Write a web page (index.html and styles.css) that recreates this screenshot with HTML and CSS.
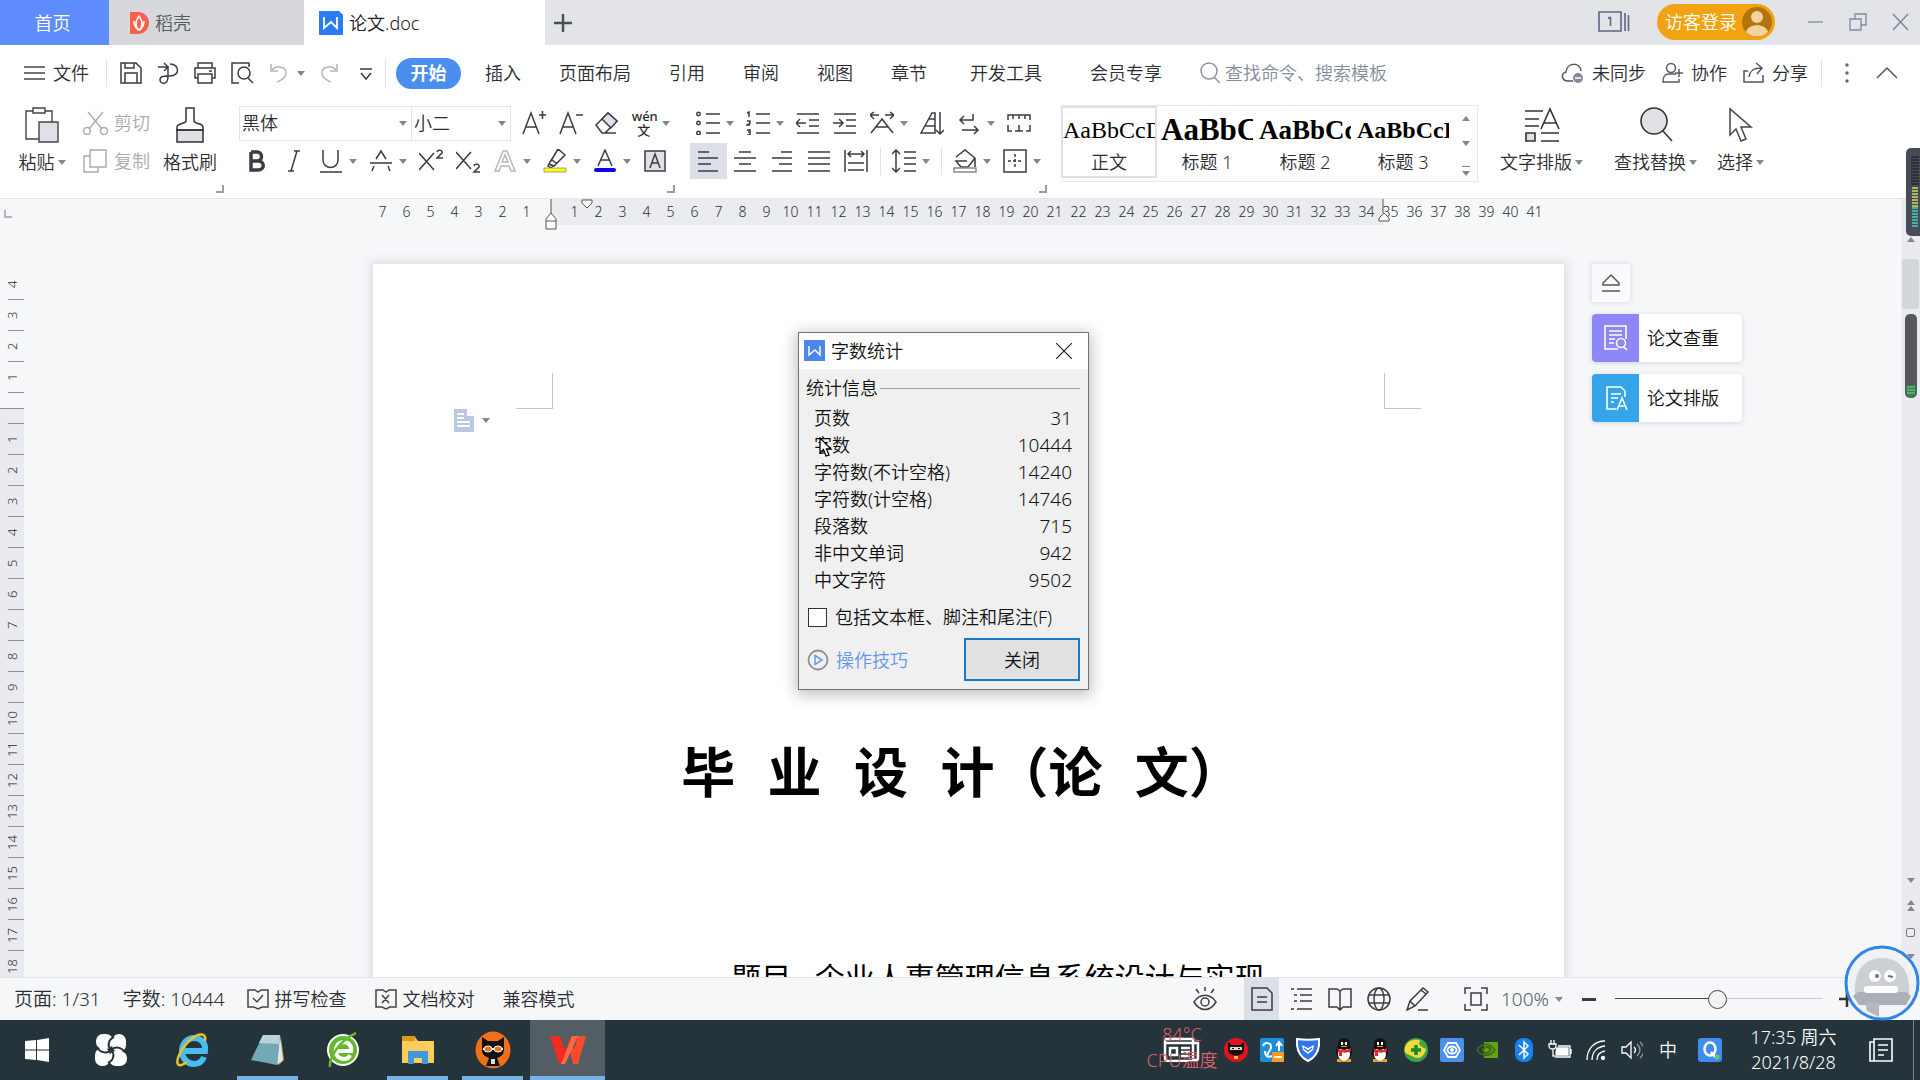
FILE: index.html
```html
<!DOCTYPE html>
<html lang="zh-CN">
<head>
<meta charset="utf-8">
<title>论文.doc</title>
<link rel="stylesheet" href="styles.css">
</head>
<body>
<header class="titlebar">
  <button class="home-tab">首页</button>
  <button class="file-tab">
    <svg width="20" height="22" viewBox="0 0 20 22"><path d="M1 0h8a10.500 10.500 0 0 1 0 22H1z" fill="#f9604c"/><path d="M10 18C6 15 6 9 10 4c4 5 4 11 0 14zM5 9c0 5 2 7 4 9M15 9c0 5-2 7-4 9" fill="none" stroke="#fff" stroke-width="1.500"/></svg>
    稻壳
  </button>
  <button class="file-tab active">
    <svg width="24" height="24" viewBox="0 0 24 24"><path fill="#2b7cf0" d="M0 0h20l4 4v20H0z"/><path d="M5 6v11l7-6 6 6V6" fill="none" stroke="#fff" stroke-width="1.800"/></svg>
    论文.doc
  </button>
  <button class="new-tab" aria-label="新建"><svg width="18" height="18" viewBox="0 0 18 18"><path d="M9 0v18M0 9h18" stroke="#4a505c" stroke-width="2.500"/></svg></button>
  <div class="title-right">
    <svg width="32" height="24" viewBox="0 0 32 24" fill="none" stroke="#5b6784" stroke-width="1.600"><path d="M1 2h22v19H1zM27 3v18M30.500 5v16M12.500 7v9M10 8.500l2.500-1.500"/></svg>
    <i class="sep"></i>
    <button class="login">访客登录
      <svg width="30" height="30" viewBox="0 0 30 30"><circle cx="15" cy="15" r="15" fill="#b37410"/><circle cx="15" cy="10" r="6" fill="#f0d49a"/><path d="M4 25c2-9 20-9 22 0-6 6-16 6-22 0z" fill="#f0d49a"/></svg>
    </button>
    <i class="sep"></i>
    <svg class="win" width="16" height="18" viewBox="0 0 16 18"><path d="M0 9h15" stroke="#8f99b0" stroke-width="1.500"/></svg>
    <svg class="win" width="18" height="18" viewBox="0 0 18 18" fill="none" stroke="#8188a0" stroke-width="1.300"><path d="M1 6h11v11H1zM6 6V1h11v11h-5"/></svg>
    <svg class="win" width="17" height="18" viewBox="0 0 17 18"><path d="M1 1l15 16M16 1L1 17" stroke="#7b8296" stroke-width="1.300"/></svg>
  </div>
</header>

<nav class="menubar">
  <button class="file-menu"><svg width="21" height="16" viewBox="0 0 21 16"><path d="M0 2h21M0 8h21M0 14h21" stroke="#444" stroke-width="1.400"/></svg>文件</button>
  <i class="sep"></i>
  <button class="tool" aria-label="保存"><svg class="ic" viewBox="0 0 24 24"><path d="M2 2h15l5 5v15H2zM6 2v5h9V2M6 22V12h12v10"/></svg></button>
  <button class="tool" aria-label="输出"><svg class="ic" viewBox="0 0 24 24"><path d="M2 6h9M8 2l4 4-4 4M14 3c10 0 10 12 0 12H9M12 15V5M12 15c0 10-8 8-8 4s4-4 8-4"/></svg></button>
  <button class="tool" aria-label="打印"><svg class="ic" viewBox="0 0 24 24"><path d="M5 7V2h14v5M5 17H2V7h20v10h-3M5 13h14v9H5zM16 10h3"/></svg></button>
  <button class="tool" aria-label="打印预览"><svg class="ic" viewBox="0 0 24 24"><path d="M9 22H2V2h17v4M18 17l5 5"/><circle cx="14" cy="12" r="6"/></svg></button>
  <button class="tool wide pale" aria-label="撤销"><svg class="ic" viewBox="0 0 24 24"><path d="M4 3v7h7M4 10c4-6 16-5 15 3-1 5-5 6-9 8"/></svg><i class="caret"></i></button>
  <button class="tool pale" aria-label="恢复"><svg class="ic" viewBox="0 0 24 24"><path d="M20 3v7h-7M20 10c-4-6-16-5-15 3 1 5 5 6 9 8"/></svg></button>
  <button class="tool" aria-label="更多"><svg class="ic" viewBox="0 0 24 24"><path d="M6 8h12M7 12l5 6 5-6"/></svg></button>
  <i class="sep"></i>
  <div class="tabs">
    <button class="pill">开始</button>
    <button>插入</button><button>页面布局</button><button>引用</button><button>审阅</button><button>视图</button><button>章节</button><button class="spaced">开发工具</button><button class="spaced">会员专享</button>
  </div>
  <label class="search"><svg width="22" height="24" viewBox="0 0 22 24" fill="none" stroke="#8d93a5" stroke-width="1.500"><circle cx="9" cy="10" r="8"/><path d="M14 16l6 6"/></svg><input type="text" aria-label="搜索" placeholder="查找命令、搜索模板"></label>
  <div class="menu-right">
    <button><svg width="24" height="24" viewBox="0 0 24 24" fill="none" stroke="#555" stroke-width="1.500"><path d="M12 20H7C0 20 0 12 5 11 6 1 19 1 20 10"/><circle cx="17" cy="17" r="5" fill="#8188a0" stroke="none"/><path d="M14 17h6" stroke="#fff"/></svg>未同步</button>
    <button><svg width="22" height="24" viewBox="0 0 22 24" fill="none" stroke="#555a6c" stroke-width="1.500"><circle cx="9" cy="7" r="4.500"/><path d="M14 13H7c-5 0-6 3-6 8h16v-3M17 8v8M13 12h8"/></svg>协作</button>
    <button><svg width="22" height="24" viewBox="0 0 22 24" fill="none" stroke="#555" stroke-width="1.500"><path d="M5 10H1v11h19v-7M6 16c1-7 5-9 12-9M13 2l6 5-5 6"/></svg>分享</button>
    <i class="sep"></i>
    <svg class="dots" width="6" height="20" viewBox="0 0 6 20" fill="#666"><circle cx="3" cy="2" r="1.700"/><circle cx="3" cy="10" r="1.700"/><circle cx="3" cy="18" r="1.700"/></svg>
    <svg width="22" height="14" viewBox="0 0 22 14"><path d="M1 12L11 2l10 10" fill="none" stroke="#555" stroke-width="1.500"/></svg>
  </div>
</nav>

<section class="ribbon">
  <div class="group clip">
    <button class="big"><svg width="34" height="36" viewBox="0 0 34 36" fill="#fff" stroke="#444" stroke-width="1.400"><path d="M8 4H1v28h14M20 4h7v11M8 1h12v5H8z"/><path d="M14 15h19v20H14z" fill="#dfe1e6"/></svg><span>粘贴<i class="caret"></i></span></button>
    <div class="rows">
      <button class="line pale"><svg width="25" height="24" viewBox="0 0 25 24" fill="none" stroke="#aaa" stroke-width="1.400"><path d="M5 1l14 17M20 1L6 18"/><circle cx="4" cy="20" r="3.500"/><circle cx="21" cy="20" r="3.500"/></svg>剪切</button>
      <button class="line pale"><svg width="25" height="24" viewBox="0 0 25 24" fill="none" stroke="#aaa" stroke-width="1.400"><path d="M7 7H1v16h14v-5M7 1h16v17H7z"/></svg>复制</button>
    </div>
    <button class="big brush"><svg width="28" height="36" viewBox="0 0 28 36" fill="none" stroke="#333" stroke-width="1.500"><path d="M1 23h26v12H1z" fill="#dfe1e6"/><path d="M10 1h8v13c0 3 9 2 9 6v3H1v-3c0-4 9-3 9-6z"/></svg><span>格式刷</span></button>
    <i class="launch"></i>
  </div>

  <div class="group font">
    <div class="row">
      <div class="combos">
        <label class="combo face"><select aria-label="字体"><option>黑体</option></select><i class="caret"></i></label>
        <label class="combo size"><select aria-label="字号"><option>小二</option></select><i class="caret"></i></label>
      </div>
      <button class="tool" aria-label="增大字号"><svg class="ic" viewBox="0 0 24 24"><path d="M1 23L9 2l8 21M4 16h10M17 4h7M20.500 0v8"/></svg></button>
      <button class="tool" aria-label="减小字号"><svg class="ic" viewBox="0 0 24 24"><path d="M1 23L9 2l8 21M4 16h10M17 4h7"/></svg></button>
      <button class="tool" aria-label="清除格式"><svg class="ic" viewBox="0 0 24 24"><path d="M1 14L13 2l9 8-12 12H7zM10 22h11"/><path d="M7 8l9 9 6-7-9-8z" fill="#dfe1e6"/></svg></button>
      <button class="tool wide" aria-label="拼音指南"><span class="wen"><span>wén</span><span>文</span></span><i class="caret"></i></button>
    </div>
    <div class="row">
      <button class="tool" aria-label="加粗"><svg class="ic heavy" viewBox="0 0 24 24"><path d="M6 3v18h7c7 0 7-9 0-9H6M6 3h6c6 0 6 9 0 9"/></svg></button>
      <button class="tool" aria-label="倾斜"><svg class="ic" viewBox="0 0 24 24"><path d="M12 2h6M6 22h6M15 2L9 22"/></svg></button>
      <button class="tool wide" aria-label="下划线"><svg class="ic" viewBox="0 0 24 24"><path d="M4 1v10c0 10 15 10 15 0V1M1 23h22"/></svg><i class="caret"></i></button>
      <button class="tool wide" aria-label="删除线"><svg class="ic" viewBox="0 0 24 24"><path d="M1 14h22M7 10l5-8 5 8M5 17l-2 5M19 17l2 5"/></svg><i class="caret"></i></button>
      <button class="tool" aria-label="上标"><svg class="ic" viewBox="0 0 24 24"><path d="M0 4l15 17M15 4L0 21M18 3c1-3 6-2 5 1l-5 5h6"/></svg></button>
      <button class="tool" aria-label="下标"><svg class="ic" viewBox="0 0 24 24"><path d="M0 3l15 17M15 3L0 20M18 17c1-3 6-2 5 1l-5 5h6"/></svg></button>
      <button class="tool wide pale" aria-label="文字效果"><svg class="ic" viewBox="0 0 24 24"><path d="M2 22L10 2h4l8 20h-4l-2-5H8l-2 5zM9 13h6l-3-7z"/></svg><i class="caret"></i></button>
      <button class="tool wide" aria-label="突出显示"><svg class="ic" viewBox="0 0 24 24"><path d="M6 15L15 0l7 6-11 11zM8 10l6 5M5 17l1-2 4 2-2 2z"/><path d="M1 19h22v4H1z" fill="#ff0" stroke="#888" stroke-width=".8"/></svg><i class="caret"></i></button>
      <button class="tool wide" aria-label="字体颜色"><svg class="ic" viewBox="0 0 24 24"><path d="M5 17l7-16 7 16M8 11h8"/><path d="M3 21h18" stroke="#1000f0" stroke-width="4" stroke-linecap="round"/></svg><i class="caret"></i></button>
      <button class="tool" aria-label="字符底纹"><svg class="ic" viewBox="0 0 24 24"><path d="M2 2h20v20H2z" fill="#dfe1e6"/><path d="M7 19l5-14 5 14M9 14h6"/></svg></button>
    </div>
    <i class="launch"></i>
  </div>

  <div class="group para">
    <div class="row">
      <button class="tool wide" aria-label="项目符号"><svg class="ic" viewBox="0 0 24 24"><path d="M10 3h14M10 12h14M10 22h14"/><circle cx="2.500" cy="3" r="1.700"/><circle cx="2.500" cy="12" r="1.700"/><circle cx="2.500" cy="22" r="1.700"/></svg><i class="caret"></i></button>
      <button class="tool wide" aria-label="编号"><svg class="ic" viewBox="0 0 24 24"><path d="M10 3h14M10 12h14M10 22h14M1 2l2-1v5M1 10h3v2l-3 2h3M1 19h3v5H1M2 21h2"/></svg><i class="caret"></i></button>
      <button class="tool" aria-label="减少缩进"><svg class="ic" viewBox="0 0 24 24"><path d="M1 3h22M13 9h10M13 15h10M1 22h22M0 12h10M4 8l-4 4 4 4"/></svg></button>
      <button class="tool" aria-label="增加缩进"><svg class="ic" viewBox="0 0 24 24"><path d="M1 3h22M13 9h10M13 15h10M1 22h22M0 12h10M6 8l4 4-4 4"/></svg></button>
      <button class="tool wide" aria-label="中文版式"><svg class="ic" viewBox="0 0 24 24"><path d="M1 22l11-14 11 14M6 16h12M0 4h9M4 1L0 4l4 4M24 4h-9M20 1l4 3-4 4"/></svg><i class="caret"></i></button>
      <button class="tool" aria-label="排序"><svg class="ic" viewBox="0 0 24 24"><path d="M1 22L12 2h3v20zM9 8h6M5 15h10M20 1v22M16 19l4 4 4-4"/></svg></button>
      <button class="tool wide" aria-label="换行"><svg class="ic" viewBox="0 0 24 24"><path d="M16 3v6H3M7 5L3 9l4 4M5 19h16M17 15l4 4-4 4"/></svg><i class="caret"></i></button>
      <button class="tool" aria-label="标尺"><svg class="ic" viewBox="0 0 24 24"><path d="M1 9V4h22v5M6 4v4M12 4v4M18 4v4M1 14v6h4M23 14v6h-4M8 20h8M12 14v6"/></svg></button>
    </div>
    <div class="row">
      <button class="tool on" aria-label="左对齐"><svg class="ic" viewBox="0 0 24 24"><path d="M2 3h11M2 9h20M2 15h13M2 22h20"/></svg></button>
      <button class="tool" aria-label="居中"><svg class="ic" viewBox="0 0 24 24"><path d="M6 3h12M1 9h22M6 15h12M1 22h22"/></svg></button>
      <button class="tool" aria-label="右对齐"><svg class="ic" viewBox="0 0 24 24"><path d="M11 3h11M2 9h20M9 15h13M2 22h20"/></svg></button>
      <button class="tool" aria-label="两端对齐"><svg class="ic" viewBox="0 0 24 24"><path d="M1 3h22M1 9h22M1 15h22M1 22h22"/></svg></button>
      <button class="tool" aria-label="分散对齐"><svg class="ic" viewBox="0 0 24 24"><path d="M1 1v22M23 1v22M4 5h16M7 2L4 5l3 3M17 2l3 3-3 3M4 14h16M4 21h16"/></svg></button>
      <i class="sep"></i>
      <button class="tool wide" aria-label="行距"><svg class="ic" viewBox="0 0 24 24"><path d="M4 1v22M0 5l4-4 4 4M0 19l4 4 4-4M12 3h12M12 9h12M12 15h12M12 22h12"/></svg><i class="caret"></i></button>
      <i class="sep"></i>
      <button class="tool wide" aria-label="底纹"><svg class="ic" viewBox="0 0 24 24"><path d="M3 8L12 1l10 8-7 9H8L3 12h11M22 9v9"/><path d="M1 19h22v4H1z" stroke="#888"/></svg><i class="caret"></i></button>
      <button class="tool wide" aria-label="边框"><svg class="ic" viewBox="0 0 24 24"><path d="M1 1h22v22H1z"/><path d="M12 5v14M5 12h14" stroke-dasharray="3 2"/></svg><i class="caret"></i></button>
    </div>
    <i class="launch"></i>
  </div>

  <div class="gallery">
    <button class="style on"><span class="sample">AaBbCcD</span>正文</button>
    <button class="style h1"><span class="sample">AaBbC</span>标题 1</button>
    <button class="style h2"><span class="sample">AaBbCc</span>标题 2</button>
    <button class="style h3"><span class="sample">AaBbCcD</span>标题 3</button>
    <div class="spin"><i class="caret up"></i><i class="caret"></i><svg width="10" height="10" viewBox="0 0 10 10" fill="#85878d"><path d="M1 0h8v1H1zM1 5h8l-4 5z"/></svg></div>
  </div>

  <div class="finals">
    <button class="big"><svg width="36" height="36" viewBox="0 0 36 36" fill="none" stroke="#333" stroke-width="1.600"><path d="M1 4h18M1 12h14M1 19h14M17 22L26 2l9 20M20 16h12M17 26h18M17 34h18"/><path d="M2 26h9v8H2z" fill="#dfe1e6"/></svg><span>文字排版<i class="caret"></i></span></button>
    <button class="big find"><svg width="34" height="36" viewBox="0 0 34 36" fill="none" stroke="#333" stroke-width="1.600"><circle cx="15" cy="14" r="13" fill="#dfe1e6"/><path d="M24 24l9 10"/></svg><span>查找替换<i class="caret"></i></span></button>
    <button class="big"><svg width="24" height="36" viewBox="0 0 24 36" fill="none" stroke="#444" stroke-width="1.500"><path d="M1 2v26l6-6 5 12 5-2-5-12h10z"/></svg><span>选择<i class="caret"></i></span></button>
  </div>
</section>

<main class="workspace">
  <div class="vruler">
    <div class="vnums"><span>4</span><span>3</span><span>2</span><span>1</span><span class="zero"></span><span>1</span><span>2</span><span>3</span><span>4</span><span>5</span><span>6</span><span>7</span><span>8</span><span>9</span><span>10</span><span>11</span><span>12</span><span>13</span><span>14</span><span>15</span><span>16</span><span>17</span><span>18</span></div>
  </div>
  <div class="canvas">
    <div class="hruler">
      <span>7</span><span>6</span><span>5</span><span>4</span><span>3</span><span>2</span><span>1</span><span></span><span>1</span><span>2</span><span>3</span><span>4</span><span>5</span><span>6</span><span>7</span><span>8</span><span>9</span><span>10</span><span>11</span><span>12</span><span>13</span><span>14</span><span>15</span><span>16</span><span>17</span><span>18</span><span>19</span><span>20</span><span>21</span><span>22</span><span>23</span><span>24</span><span>25</span><span>26</span><span>27</span><span>28</span><span>29</span><span>30</span><span>31</span><span>32</span><span>33</span><span>34</span><span>35</span><span>36</span><span>37</span><span>38</span><span>39</span><span>40</span><span>41</span>
      <svg class="mark first" width="12" height="10" viewBox="0 0 12 10"><path d="M1 1h10v3L6 9 1 4z"/></svg>
      <svg class="mark left" width="12" height="32" viewBox="0 0 12 32"><path d="M6 0v14M1 30V20l5-6 5 6v10zM1 22h10"/></svg>
      <svg class="mark right" width="12" height="24" viewBox="0 0 12 24"><path d="M5 0v14M1 22v-3l5-5 5 5v3z"/></svg>
    </div>
    <article class="page">
      <div class="crops"><i class="crop tl"></i><i class="crop tr"></i></div>
      <div class="smart"><svg width="20" height="23" viewBox="0 0 20 23"><path d="M0 0h13l7 7v16H0z" fill="#b9c7e4"/><path d="M3 5h7M3 9h7M3 13h13M3 17h13" stroke="#fff" stroke-width="2"/><path d="M13 0v7h7" fill="#fff"/></svg><i class="caret"></i></div>
      <h1>毕 业 设 计（论 文）</h1>
      <p>题目&nbsp;&nbsp; 企业人事管理信息系统设计与实现</p>
    </article>
  </div>
  <div class="scrollbar">
    <i class="caret up"></i><i class="thumb"></i>
    <div class="scroll-end"><i class="caret"></i><span><i class="caret up"></i><i class="caret up"></i></span><i class="box"></i><i class="caret"></i></div>
  </div>

  <i class="tabstop"></i>
  <aside class="side">
    <button class="eject" aria-label="收起"><svg width="20" height="20" viewBox="0 0 20 20" fill="none" stroke="#555" stroke-width="1.500"><path d="M10 2l8 8v2H2v-2zM1 18h18"/></svg></button>
    <button class="card"><span class="tile violet"><svg width="26" height="26" viewBox="0 0 26 26" fill="none" stroke="#fff" stroke-width="1.600"><path d="M15 24H2V1h21v13M6 6h13M6 10h13M6 14h6M6 18h5"/><circle cx="18" cy="18" r="4.500"/><path d="M21 22l3 3"/></svg></span>论文查重</button>
    <button class="card"><span class="tile sky"><svg width="26" height="26" viewBox="0 0 26 26" fill="none" stroke="#fff" stroke-width="1.600"><path d="M13 24H4V2h14l4 4v6M8 9h10M8 13h7M8 17h3M14 25l5-12 5 12M16 21h6"/></svg></span>论文排版</button>
  </aside>

  <section class="dialog" role="dialog" aria-label="字数统计">
    <header><svg width="21" height="21" viewBox="0 0 21 21"><path d="M0 0h21v21H0z" fill="#4a86ee"/><path d="M5 6v9l6-5 5 5V6" fill="none" stroke="#fff" stroke-width="1.500"/></svg>字数统计<button aria-label="关闭窗口"><svg width="16" height="16" viewBox="0 0 16 16"><path d="M0 0l16 16M16 0L0 16" stroke="#222" stroke-width="1.200"/></svg></button></header>
    <div class="legend">统计信息</div>
    <table>
      <tr><th>页数</th><td>31</td></tr>
      <tr><th>字数</th><td>10444</td></tr>
      <tr><th>字符数(不计空格)</th><td>14240</td></tr>
      <tr><th>字符数(计空格)</th><td>14746</td></tr>
      <tr><th>段落数</th><td>715</td></tr>
      <tr><th>非中文单词</th><td>942</td></tr>
      <tr><th>中文字符</th><td>9502</td></tr>
    </table>
    <label class="check"><input type="checkbox">包括文本框、脚注和尾注(F)</label>
    <footer>
      <a href="#"><svg width="22" height="22" viewBox="0 0 22 22" fill="none"><circle cx="11" cy="11" r="9.500" stroke="#8d9098" stroke-width="1.800"/><path d="M8 6.500l7 4.500-7 4.500z" stroke="#6a9be8" stroke-width="1.500"/></svg>操作技巧</a>
      <button>关闭</button>
    </footer>
    <svg class="pointer" width="14" height="20" viewBox="0 0 14 20"><path d="M1 1v15l3.500-3.500L7 19l3-1-2.500-6H12z" fill="#fff" stroke="#000" stroke-width="1.300"/></svg>
  </section>
</main>

<div class="statusbar">
  <span class="count">页面: 1/31</span><span class="count">字数: 10444</span>
  <button><svg width="22" height="22" viewBox="0 0 22 22" fill="none" stroke="#444" stroke-width="1.500"><path d="M8 2H1v17h6l4 2 4-2h6V2h-7l-3 2zM6 10l4 4 6-7"/></svg>拼写检查</button>
  <button><svg width="22" height="22" viewBox="0 0 22 22" fill="none" stroke="#444" stroke-width="1.500"><path d="M8 2H1v17h6l4 2 4-2h6V2h-7l-3 2zM7 7l7 8M14 7l-7 8"/></svg>文档校对</button>
  <span class="compat">兼容模式</span>
  <div class="status-right">
    <button class="view eye" aria-label="护眼模式"><svg class="ic" viewBox="0 0 24 24"><path d="M1 15c6-9 16-9 22 0-6 10-16 10-22 0zM12 0v4M3 2l3 4M21 2l-3 4"/><circle cx="12" cy="15" r="4"/></svg></button>
    <button class="view on" aria-label="页面视图"><svg class="ic" viewBox="0 0 24 24"><path d="M2 1h15l5 5v17H2zM7 10h10M7 15h10"/></svg></button>
    <button class="view" aria-label="大纲"><svg class="ic" viewBox="0 0 24 24"><path d="M2 2h3M8 2h15M5 8h3M11 8h12M5 14h3M11 14h12M2 22h3M8 22h15"/></svg></button>
    <button class="view" aria-label="阅读版式"><svg class="ic" viewBox="0 0 24 24"><path d="M1 2h8l3 2 3-2h8v18h-8l-3 3-3-3H1zM12 4v18"/></svg></button>
    <button class="view" aria-label="Web 版式"><svg class="ic" viewBox="0 0 24 24"><circle cx="12" cy="12" r="11"/><ellipse cx="12" cy="12" rx="5" ry="11"/><path d="M2 8h20M2 16h20"/></svg></button>
    <button class="view" aria-label="写作模式"><svg class="ic" viewBox="0 0 24 24"><path d="M1 23l3-9L17 1l5 4-13 14zM4 14l5 5M12 23h10M15 3l5 4"/></svg></button>
    <button class="view fit" aria-label="适合页面"><svg class="ic" viewBox="0 0 24 24"><path d="M1 7V1h6M17 1h6v6M23 17v6h-6M7 23H1v-6M7 6h10v12H7z"/></svg></button>
    <button class="zoom">100%<i class="caret"></i></button>
    <button class="minus" aria-label="缩小"></button>
    <input type="range" aria-label="缩放" min="0" max="100" value="49">
    <button class="plus" aria-label="放大"><svg width="16" height="16" viewBox="0 0 16 16"><path d="M8 0v16M0 8h16" stroke="#333" stroke-width="2.500"/></svg></button>
  </div>
</div>

<footer class="taskbar">
  <button class="app start" aria-label="开始菜单"><svg width="24" height="24" viewBox="0 0 24 24" fill="#fff"><path d="M0 3l11-1v9.500H0zM12 2l12-2v11.500H12zM0 12.500h11V22L0 21zM12 12.500h12V24l-12-2z"/></svg></button>
  <button class="app" aria-label="助手"><svg width="34" height="34" viewBox="0 0 34 34" fill="#fff"><rect x="2" y="1" width="17" height="15" rx="7"/><rect x="18" y="1" width="14" height="18" rx="7"/><rect x="15" y="18" width="18" height="15" rx="7"/><rect x="1" y="15" width="15" height="18" rx="7"/><path d="M17 17c-4-4-3-10 3-13M17 17c4-4 10-3 14 2M17 17c4 4 3 10-3 13M17 17c-4 4-10 3-14-2" stroke="#26343a" stroke-width="2" fill="none"/></svg></button>
  <button class="app after" aria-label="浏览器"><svg width="36" height="36" viewBox="0 0 36 36" fill="none"><path d="M8 19h22c1-8-4-13-11-13C12 6 7 12 7 19s5 13 12 13c5 0 8-2 10-7" stroke="#48bdf0" stroke-width="6"/><path d="M30 9C32 1 24 0 15 8 6 16-1 31 4 33c2 1 5-1 8-3" stroke="#f0be2a" stroke-width="2.500"/></svg></button>
  <button class="app run" aria-label="记事本"><svg width="36" height="34" viewBox="0 0 36 34"><path d="M31 5l3 22-5 5z" fill="#c69b4a"/><path d="M13 2h17l-3 30L1 27z" fill="#73a9b5"/><path d="M13 2h17l-1 9-20-1z" fill="#b8d3da"/><path d="M30 2l3 25-6 5z" fill="#dde6ea"/></svg></button>
  <button class="app" aria-label="安全浏览器"><svg width="34" height="36" viewBox="0 0 34 36" fill="none"><circle cx="17" cy="18" r="15" fill="#63b92c" stroke="#fff" stroke-width="2"/><path d="M10 19h15c1-6-3-9-8-9-10 1-10 17 1 17 3 0 5-1 6-4" stroke="#fff" stroke-width="4"/><path d="M4 35c-1-8 8-26 26-34" stroke="#63b92c" stroke-width="2.500"/></svg></button>
  <button class="app run" aria-label="文件资源管理器"><svg width="34" height="30" viewBox="0 0 34 30"><path d="M1 2h13l3 4h16v22H1z" fill="#ffcd5e"/><path d="M1 1h13v5H1z" fill="#d99a16"/><path d="M7 29V16h20v13h-6v-6h-8v6z" fill="#3f97dc"/></svg></button>
  <button class="app run" aria-label="黑猫"><svg width="36" height="38" viewBox="0 0 36 38"><ellipse cx="18" cy="19" rx="17.500" ry="18.500" fill="#f0701a"/><path d="M7 6l6 4h10l6-4v13c0 5-4 7-7 8l3 8H11l3-8c-3-1-7-3-7-8z" fill="#111"/><path d="M8 17h20v2H8z" fill="#fff"/><ellipse cx="13" cy="18" rx="4" ry="3" fill="#f0701a" stroke="#fff"/><ellipse cx="23" cy="18" rx="4" ry="3" fill="#f0701a" stroke="#fff"/><path d="M16 28h4v5h-4z" fill="#ddd"/></svg></button>
  <button class="app run active" aria-label="WPS"><svg width="36" height="30" viewBox="0 0 36 30"><path d="M0 1h10l5 15 6-15h7L15 29H9z" fill="#f32a1d"/><path d="M19 12l4 17h5l8-28h-8l-4 14-2-8z" fill="#fb4b28"/><path d="M22 1h6L15 29h-4z" fill="#ff6a45"/></svg></button>
  <div class="tray">
    <div class="news"><span class="temp">84°C<br>CPU温度</span><svg width="37" height="25" viewBox="0 0 37 25" fill="none" stroke="#fff" stroke-width="2.500"><path d="M2 2h28v19c0 3 5 3 5 0V6h-5M2 2v19c0 2 1 3 3 3h28M2 6h28M7 11h7v7H7zM18 11h9M18 15h9M18 19h9"/></svg></div>
    <span class="cell"><svg width="24" height="24" viewBox="0 0 24 24"><circle cx="12" cy="12" r="12" fill="#e4121c"/><path d="M4 4l4 3h8l4-3v9c-2 6-14 6-16 0z" fill="#111"/><path d="M6 9h12v3H6z" fill="#f6d2c4"/><path d="M8 10h2v1H8zM14 10h2v1h-2z" fill="#111"/><path d="M10 18h4v3h-4z" fill="#f6b84c"/></svg></span>
    <span class="cell"><svg width="24" height="24" viewBox="0 0 24 24"><rect width="24" height="24" rx="2" fill="#1e8fd8"/><path d="M3 8c1-4 8-4 8 1 0 4-4 5-3 8M5 13c0 5 3 7 7 5M19 13V4M16 8l3-4 3 4" stroke="#fff" stroke-width="2" fill="none"/><path d="M12 14h12v10H12z" fill="#f79a1e"/><path d="M14 19h8" stroke="#fff" stroke-width="2"/></svg></span>
    <span class="cell"><svg width="24" height="24" viewBox="0 0 24 24"><path d="M1 1c8 1 14 1 22 0 1 11-3 18-11 22C4 19 0 12 1 1z" fill="#2e77ea" stroke="#fff" stroke-width="2"/><path d="M6 7l6 3 6-3-1 5-5 4-5-4z" fill="#fff"/><path d="M8 10l4 3 4-3" fill="none" stroke="#2e77ea" stroke-width="1.500"/></svg></span>
    <span class="cell"><svg width="20" height="24" viewBox="0 0 20 24"><path d="M3 21h14v3H3z" fill="#e8a21c"/><ellipse cx="10" cy="14" rx="8" ry="9" fill="#111"/><ellipse cx="10" cy="16" rx="6" ry="7" fill="#fff"/><circle cx="10" cy="6" r="6" fill="#111"/><path d="M7 4h2v3H7zM11 4h2v3h-2z" fill="#fff"/><path d="M7 8h6v1H7z" fill="#f0a010"/><path d="M3 10c5 3 9 3 14 0v3c-4 2-7 2-9 1v4H5v-4z" fill="#e8232d"/></svg></span>
    <span class="cell"><svg width="20" height="24" viewBox="0 0 20 24"><path d="M3 21h14v3H3z" fill="#e8a21c"/><ellipse cx="10" cy="14" rx="8" ry="9" fill="#111"/><ellipse cx="10" cy="16" rx="6" ry="7" fill="#fff"/><circle cx="10" cy="6" r="6" fill="#111"/><path d="M7 4h2v3H7zM11 4h2v3h-2z" fill="#fff"/><path d="M7 8h6v1H7z" fill="#f0a010"/><path d="M3 10c5 3 9 3 14 0v3c-4 2-7 2-9 1v4H5v-4z" fill="#e8232d"/></svg></span>
    <span class="cell"><svg width="24" height="24" viewBox="0 0 24 24"><circle cx="12" cy="12" r="12" fill="#3aa845"/><path d="M1 14C-1 5 9-1 17 3c-4 1-2 5 5 8-2 9-8 10-12 8-5-3-7-2-9-5z" fill="#f7d934"/><path d="M12 7v10M7 12h10" stroke="#138a36" stroke-width="3.500"/></svg></span>
    <span class="cell"><svg width="24" height="24" viewBox="0 0 24 24" fill="none" stroke="#fff" stroke-width="1.800"><rect width="24" height="24" rx="2" fill="#4a90ee" stroke="none"/><path d="M8 5h8l4 7-4 7H8l-4-7z"/><ellipse cx="12" cy="12" rx="4.500" ry="3.500"/><circle cx="12" cy="12" r="1"/></svg></span>
    <span class="cell"><svg width="24" height="24" viewBox="0 0 24 24" fill="none"><path d="M8 4h14v16H8z" fill="#64a30f"/><path d="M1 12c5-8 13-7 18 0-5 7-13 7-18 0zM6 12c3-4 7-4 9 0-3 4-6 4-9 0z" stroke="#3d6b1b" stroke-width="1.800"/></svg></span>
    <span class="cell"><svg width="18" height="24" viewBox="0 0 18 24"><rect width="18" height="24" rx="8" fill="#1683ef"/><path d="M4 7l9 9-4 4V4l4 4-9 9" fill="none" stroke="#fff" stroke-width="1.500"/></svg></span>
    <span class="cell"><svg width="24" height="20" viewBox="0 0 24 20" fill="none" stroke="#fff" stroke-width="1.300"><path d="M3 0v4M6 0v4M1 4h7v2c0 4-7 4-7 0zM5 9v7h2"/><path d="M9 8h11v7H8v-3z" fill="#fff"/><path d="M10 6h12v11H7M23 9v5"/></svg></span>
    <span class="cell"><svg width="20" height="22" viewBox="0 0 20 22" fill="none" stroke="#fff" stroke-width="1.300"><path d="M1 21C1 10 8 2 19 2M6 21c0-8 5-13 13-14M11 21c0-5 3-8 8-9"/><circle cx="17" cy="19" r="1.500" fill="#fff"/></svg></span>
    <span class="cell"><svg width="22" height="22" viewBox="0 0 22 22" fill="none" stroke="#fff" stroke-width="1.300"><path d="M1 8h4l5-5v16l-5-5H1zM13 8c2 2 2 4 0 6"/><path d="M16 5c4 4 4 8 0 12M19 3c5 5 5 11 0 16" stroke="#8f999d"/></svg></span>
    <span class="cell ime">中</span>
    <span class="cell q"><svg width="24" height="24" viewBox="0 0 24 24"><rect width="24" height="24" rx="3" fill="#3c8cf2"/><ellipse cx="12" cy="11" rx="5.500" ry="6.500" fill="none" stroke="#fff" stroke-width="2.500"/><path d="M13 14l4 5" stroke="#fff" stroke-width="2.500"/><circle cx="19" cy="19" r="2.500" fill="#5fd35f"/></svg></span>
    <time>17:35 周六<br>2021/8/28</time>
    <button class="notify" aria-label="通知"><svg width="24" height="24" viewBox="0 0 24 24" fill="none" stroke="#fff" stroke-width="1.600"><path d="M5 1h18v22H5zM5 4H1v19h4M9 7h10M9 12h10M9 17h6"/></svg></button>
    <i class="desk"></i>
  </div>
</footer>

<svg class="robot" width="76" height="76" viewBox="0 0 76 76"><circle cx="38" cy="38" r="35" fill="#f0f2f6"/><path d="M11 50C9 24 22 13 38 13s29 11 27 37z" fill="#cccfd3"/><path d="M9 51l5-4h48l5 4-5 9H15z" fill="#abafb6"/><path d="M21 57h14v15l-12-6z" fill="#b5b9bf"/><path d="M35 61h28l-8 9-20 3z" fill="#f4f5f7"/><circle cx="31" cy="31" r="6" fill="#fff"/><circle cx="46" cy="31" r="6" fill="#fff"/><circle cx="33" cy="31" r="2" fill="#6c7078"/><path d="M44 31l5 1" stroke="#6c7078" stroke-width="2"/><rect x="20" y="41" width="34" height="7" rx="3" fill="#fff"/><circle cx="38" cy="38" r="36" fill="none" stroke="#2f86ea" stroke-width="3"/></svg>
<svg class="meter" width="14" height="88" viewBox="0 0 14 88"><rect width="22" height="88" rx="5" fill="#474b57"/><path d="M9 8v30" stroke="#2c3038" stroke-width="8" stroke-dasharray="2 1"/><path d="M9 39v20" stroke="#a9b95a" stroke-width="6" stroke-dasharray="2 1"/><path d="M9 59v20" stroke="#42b09b" stroke-width="6" stroke-dasharray="2 1"/></svg>
<svg class="meter low" width="12" height="84" viewBox="0 0 12 84"><rect width="12" height="84" rx="5" fill="#56575c"/><path d="M1 71h10v7c0 3-2 6-5 6s-5-3-5-6z" fill="#35804e"/><path d="M2 73h8M2 76h8M2 79h8" stroke="#7ed09a"/></svg>
</body>
</html>
```

FILE: styles.css
```css
* { box-sizing: border-box; }

body {
  margin: 0;
  height: 100vh;
  display: flex;
  flex-direction: column;
  overflow: hidden;
  font: 350 18px/24px "Noto Sans", "Noto Sans CJK SC", sans-serif;
  color: #2b2d33;
  background: #fff;
}

button, input, select {
  font: inherit;
  color: inherit;
  border: 0;
  margin: 0;
  padding: 0;
  background: none;
  white-space: nowrap;
}

svg { display: block; flex: none; }

.ic {
  width: 24px;
  height: 24px;
  fill: none;
  stroke: #3a3d45;
  stroke-width: 1.5;
}
.ic.heavy { stroke-width: 3.5; }
.pale { color: #a9abb0; }
.pale .ic { stroke: #b5b7bc; }

.caret {
  display: inline-block;
  flex: none;
  width: 0;
  height: 0;
  border: 4px solid transparent;
  border-top: 5px solid #85878d;
  border-bottom: 0;
}
.caret.up { border-top: 0; border-bottom: 5px solid #85878d; }

.sep { width: 1px; height: 28px; background: #e0e2e6; flex: none; }

/* title bar */
.titlebar {
  display: flex;
  height: 45px;
  flex: none;
  background: #e2e4e7;
}
.home-tab { width: 109px; padding-right: 4px; color: #fff; background: #5f8cfc; }
.file-tab {
  display: flex;
  align-items: center;
  gap: 6px;
  width: 195px;
  padding-left: 20px;
  background: #d7d8db;
  color: #555962;
}
.file-tab.active { width: 241px; padding-left: 15px; background: #fff; color: #222; }
.new-tab { padding: 0 9px; }
.title-right { display: flex; align-items: center; margin-left: auto; gap: 13px; padding: 0 5px 2px 0; }
.login {
  display: flex;
  align-items: center;
  gap: 5px;
  height: 36px;
  padding: 0 3px 0 8px;
  border-radius: 18px;
  color: #fff;
  background: #f2a312;
}
.win { margin: 0 6px; }

/* menu bar */
.menubar { display: flex; align-items: center; height: 56px; flex: none; padding: 0 22px 0 24px; }
.file-menu { display: flex; align-items: center; gap: 8px; margin-right: 17px; }
.menubar > .sep + .tool { margin-left: 6px; }
.tool {
  display: flex;
  align-items: center;
  width: 37px;
  height: 36px;
  padding-left: 6px;
  gap: 6px;
}
.tool.wide { width: 50px; }
.tool.on { background: #dcdfe5; }
.tabs { display: flex; align-items: center; gap: 38px; margin-left: 10px; }
.pill {
  width: 65px;
  height: 31px;
  margin-right: -14px;
  border-radius: 16px;
  font-weight: 700;
  color: #fff;
  background: #4a8ef0;
}
.spaced { margin: 0 5px; }
.search { display: flex; align-items: center; gap: 3px; margin-left: 33px; }
.search input { width: 200px; outline: 0; }
.search input::placeholder { color: #868b9c; opacity: 1; }
.menu-right { display: flex; align-items: center; gap: 16px; margin-left: auto; }
.menu-right button { display: flex; align-items: center; gap: 7px; }
.menu-right .sep { margin: 0 6px 0 -3px; }
.dots { margin-right: 10px; }

/* ribbon */
.ribbon {
  display: flex;
  align-items: flex-start;
  height: 98px;
  flex: none;
  padding: 4px 0 0 12px;
  border-bottom: 1px solid #e3e5e9;
}
.group { position: relative; height: 89px; display: flex; }
.group.font, .group.para { flex-direction: column; gap: 2px; }
.clip { width: 212px; margin-right: 15px; }
.font { width: 436px; margin-right: 15px; }
.launch {
  position: absolute;
  right: 0;
  bottom: 1px;
  width: 8px;
  height: 8px;
  border: solid #9a9ca3;
  border-width: 0 2px 2px 0;
}
.row { display: flex; align-items: center; }
.row .sep { margin: 0 5px; }
.big { display: flex; flex-direction: column; align-items: center; align-self: flex-start; gap: 7px; padding-top: 2px; }
.big span { display: flex; align-items: center; gap: 3px; }
.clip .big { width: 60px; }
.rows { display: flex; flex-direction: column; gap: 2px; margin: 0 10px 0 11px; }
.line { display: flex; align-items: center; gap: 6px; height: 36px; }
.combos { display: flex; height: 35px; margin-right: 5px; border: 1px solid #e2e4e8; }
.combo { display: flex; align-items: center; padding: 0 4px 0 2px; }
.combo select { appearance: none; flex: 1; min-width: 0; outline: 0; }
.face { width: 172px; border-right: 1px solid #e2e4e8; }
.size { width: 98px; }
.wen { width: 24px; font-size: 13px; line-height: 14px; font-weight: 500; text-align: center; }
.wen span { display: block; }

.gallery {
  display: flex;
  gap: 2px;
  height: 77px;
  margin-left: 14px;
  padding-right: 2px;
  border: solid #e6e8eb;
  border-width: 1px 1px 1px 0;
}
.style {
  width: 96px;
  height: 72px;
  border: 2px solid transparent;
  overflow: hidden;
}
.style.on { border-color: #dfe1e5; }
.sample {
  display: block;
  height: 40px;
  overflow: hidden;
  text-align: left;
  font: 400 24px/40px "Liberation Serif", serif;
  color: #000;
}
.h1 .sample { font-size: 31px; font-weight: 700; }
.h2 .sample { font-size: 27px; font-weight: 700; }
.h3 .sample { font-size: 24px; font-weight: 700; }
.spin { display: flex; flex-direction: column; justify-content: space-between; align-items: center; padding: 10px 4px 5px 8px; }
.finals { display: flex; margin-left: 22px; gap: 31px; }
.find { margin-right: -11px; }

/* work area */
.workspace {
  position: relative;
  display: flex;
  flex: 1;
  min-height: 0;
  overflow: hidden;
  background: #f6f7f9;
}
.tabstop {
  position: absolute;
  left: 4px;
  top: 11px;
  width: 8px;
  height: 8px;
  border: solid #b4b6bb;
  border-width: 0 0 2px 2px;
}
.vruler { width: 24px; flex: none; padding-top: 70px; }
.vnums { display: flex; flex-direction: column; font-size: 13px; background: linear-gradient(transparent 140px, #e9ebf0 140px); }
.vnums span {
  height: 31px;
  flex: none;
  line-height: 24px;
  writing-mode: vertical-rl;
  transform: rotate(180deg);
  text-align: center;
  background: linear-gradient(#8f9299, #8f9299) 0 0 / 16px 1px no-repeat;
}
.vnums .zero {
  background: linear-gradient(#8f9299, #8f9299) 0 0 / 16px 1px no-repeat, linear-gradient(#8f9299, #8f9299) 0 15px / 24px 1px no-repeat;
}
.canvas { flex: 1; display: flex; flex-direction: column; align-items: center; padding-left: 11px; overflow: hidden; }
.hruler {
  position: relative;
  display: flex;
  width: 1195px;
  height: 26px;
  flex: none;
  font-size: 14px;
  line-height: 26px;
  background: linear-gradient(#eaecf0, #eaecf0) 180px 0 / 832px 26px no-repeat;
}
.hruler span { width: 24px; text-align: center; flex: none; }
.mark { position: absolute; fill: #fff; stroke: #555; }
.mark.first { left: 210px; top: 0; }
.mark.left { left: 174px; top: 0; }
.mark.right { left: 1007px; top: 0; }
.page {
  width: 1191px;
  flex: 1 0 auto;
  margin-top: 39px;
  padding-top: 109px;
  background: #fff;
  box-shadow: 0 0 8px 3px #dcdee2;
  color: #000;
}
.crops { display: flex; justify-content: space-between; padding: 0 143px; }
.crop { width: 37px; height: 36px; border: solid #c3c5c9; border-width: 0 1px 1px 0; }
.crop.tr { border-width: 0 0 1px 1px; }
.smart { display: flex; align-items: center; gap: 8px; margin-left: 81px; }
.page h1 {
  margin: 307px 0 0;
  padding-right: 12px;
  text-align: center;
  font: 700 54px/80px "Liberation Mono", "Noto Sans CJK SC", monospace;
}
.page p { margin: 139px 0 0; padding-left: 60px; text-align: center; font-size: 30px; line-height: 40px; font-weight: 400; }

.scrollbar {
  width: 19px;
  flex: none;
  display: flex;
  flex-direction: column;
  align-items: center;
  padding-top: 38px;
  background: #e9ebf0;
}
.thumb { width: 17px; height: 50px; margin-top: 17px; background: #d3d6da; border-radius: 2px; }
.scroll-end { display: flex; flex-direction: column; align-items: center; gap: 17px; margin-top: auto; padding-bottom: 18px; }
.scroll-end span { display: flex; flex-direction: column; gap: 1px; }
.box { width: 9px; height: 9px; border: 1px solid #777; border-radius: 2px; }

.side { position: absolute; right: 178px; top: 65px; display: flex; flex-direction: column; align-items: flex-start; }
.eject { padding: 9px; background: #f9fafb; box-shadow: 0 0 4px 1px #dcdee2; }
.card {
  display: flex;
  align-items: center;
  gap: 8px;
  width: 150px;
  height: 48px;
  margin-top: 12px;
  background: #fff;
  color: #111;
  border-radius: 4px;
  overflow: hidden;
  box-shadow: 0 1px 5px #d3d5da;
}
.tile { display: flex; align-items: center; justify-content: center; width: 47px; height: 48px; }
.violet { background: #8d87f8; }
.sky { background: #34a5ea; }

/* word count dialog */
.dialog {
  position: absolute;
  left: calc(50% - 162px);
  top: 133px;
  width: 291px;
  border: 1px solid #6f7175;
  background: #f0f0f0;
  color: #111;
  box-shadow: 0 3px 14px 2px rgba(0, 0, 0, .25);
}
.dialog header { display: flex; align-items: center; gap: 6px; height: 36px; padding: 0 0 1px 5px; background: #fff; }
.dialog header button { margin-left: auto; padding: 8px 16px; }
.legend { display: flex; align-items: center; gap: 2px; margin: 7px 8px 3px 7px; line-height: 25px; }
.legend::after { content: ""; flex: 1; height: 1px; background: #a5a5a5; }
.dialog table { width: 258px; margin-left: 15px; border-collapse: collapse; }
.dialog th, .dialog td { padding: 0; height: 27px; font-weight: inherit; text-align: left; line-height: 26px; }
.dialog td { text-align: right; font-size: 19px; }
.check { display: flex; align-items: center; gap: 8px; margin: 12px 9px 9px; }
.check input { appearance: none; width: 19px; height: 19px; border: 1px solid #333; background: #fff; }
.dialog footer { display: flex; align-items: center; justify-content: space-between; padding: 0 8px; margin-bottom: 8px; }
.dialog a { display: flex; align-items: center; gap: 7px; color: #6496e6; text-decoration: none; }
.dialog footer button { width: 116px; height: 43px; border: 2px solid #1a78c8; background: #e1e1e1; }
.pointer { position: absolute; left: 20px; top: 104px; }

/* status bar */
.statusbar {
  display: flex;
  align-items: center;
  height: 43px;
  flex: none;
  padding-left: 14px;
  gap: 22px;
  border-top: 1px solid #e1e3e7;
  background: #f6f7f9;
}
.statusbar button { display: flex; align-items: center; gap: 6px; }
.statusbar > button + button { margin-left: 6px; }
.count { font-size: 19px; }
.compat { margin-left: 6px; }
.status-right { display: flex; align-items: center; height: 100%; margin-left: auto; padding-right: 65px; }
.view { width: 39px; height: 100%; justify-content: center; }
.view.on { width: 35px; background: #dcdfe5; margin: 0 2px; }
.eye { margin-right: 18px; }
.fit { margin: 0 6px 0 19px; }
.zoom { color: #555a6a; font-size: 19px; }
.minus { width: 14px; height: 3px; background: #3a3d45; margin: 0 19px; }
input[type="range"] {
  appearance: none;
  width: 208px;
  height: 20px;
  margin-right: 16px;
  background: linear-gradient(90deg, #444 50%, #c9cbcf 50%) 0 9px / 100% 1px no-repeat;
}
input[type="range"]::-webkit-slider-thumb {
  appearance: none;
  width: 19px;
  height: 19px;
  border: 1px solid #444;
  border-radius: 50%;
  background: #f3f3f3;
}

/* task bar */
.taskbar { display: flex; height: 60px; flex: none; background: #25333a; color: #fff; }
.app { display: flex; align-items: center; justify-content: center; width: 75px; border-bottom: 4px solid transparent; padding-top: 4px; }
.app.start { width: 73px; }
.after { margin-left: 7px; }
.app.run { background: linear-gradient(#76b3e4, #76b3e4) center bottom / 61px 4px no-repeat border-box; }
.app.run.active { background: linear-gradient(#76b3e4, #76b3e4) center bottom / 75px 4px no-repeat border-box, #535e64 border-box; }
.tray { display: flex; align-items: center; margin-left: auto; padding-right: 6px; }
.news { position: relative; padding: 0 18px; margin-bottom: 2px; }
.temp { position: absolute; left: 0; top: -16px; width: 74px; text-align: center; line-height: 26px; color: #d9626c; }
.cell { display: flex; justify-content: center; width: 36px; }
.q { margin: 0 19px 0 6px; }
.tray time { width: 93px; text-align: center; line-height: 25px; white-space: nowrap; }
.notify { margin: 0 20px 0 29px; }
.desk { width: 1px; height: 100%; background: #7d878c; }

/* overlays on top of every window */
.robot { position: absolute; right: 0; bottom: 59px; }
.meter { position: absolute; right: 0; top: 148px; }
.meter.low { right: 3px; top: 314px; }
```
